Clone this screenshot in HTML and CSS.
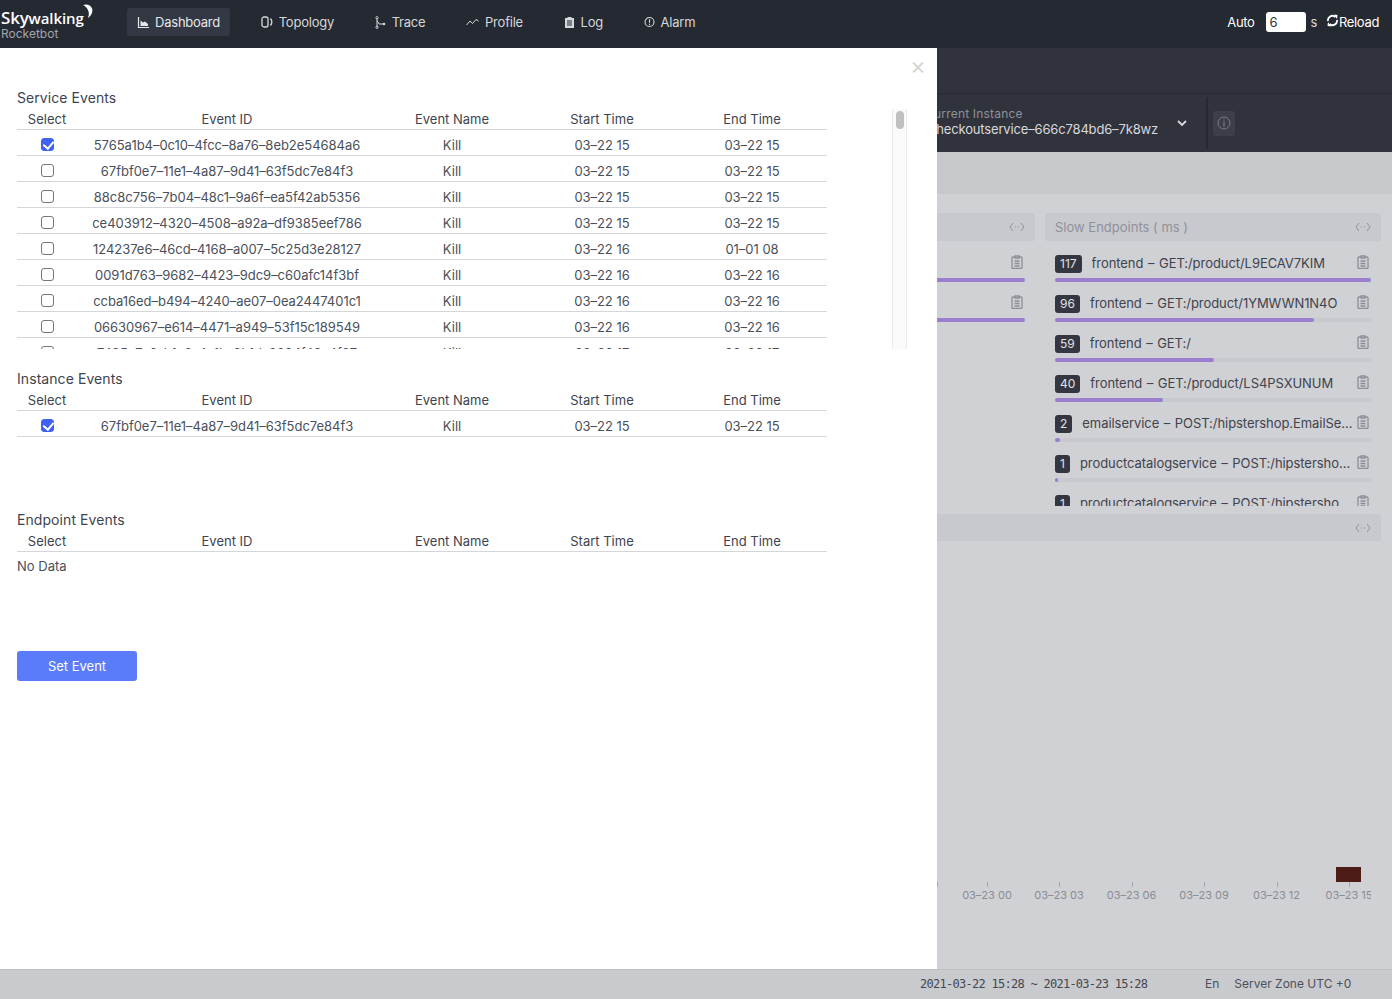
FILE: index.html
```html
<!DOCTYPE html>
<html lang="en">
<head>
<meta charset="utf-8">
<title>Skywalking Rocketbot</title>
<link rel="stylesheet" href="styles.css">
</head>
<body>
<svg class="defs" width="0" height="0" aria-hidden="true">
  <symbol id="clip" viewBox="0 0 12 14"><path d="M3.500 2H2a1 1 0 0 0-1 1v9.500a1 1 0 0 0 1 1h8a1 1 0 0 0 1-1V3a1 1 0 0 0-1-1H8.500M4 1h4v2H4zM3.500 6h5M3.500 8.500h5M3.500 11h5" fill="none" stroke="currentColor" stroke-width="1.300"/></symbol>
  <symbol id="code" viewBox="0 0 16 10"><path d="M4 1 1 5l3 4M12 1l3 4-3 4" fill="none" stroke="currentColor" stroke-width="1"/><path d="M6 5h1M9 5h1" stroke="currentColor" stroke-width="1.200"/></symbol>
</svg>
<header class="topbar">
  <div class="logo">
    <div class="logo-main"><span class="logo-sky">Sky</span>walking<svg class="logo-arc" width="11" height="15" viewBox="0 0 11 15"><path d="M1 1c3-1.200 8-.5 9.200 4 .8 3.500-1.200 7-4.200 9 1.200-3 1.200-6-.3-8.500C4.800 3.500 3 2 1 1z" fill="#fff"/></svg></div>
    <div class="logo-sub">Rocketbot</div>
  </div>
  <nav class="nav">
    <a class="nav-item active"><svg width="12" height="11" viewBox="0 0 12 11"><path d="M1.500 0v10.500H12" fill="none" stroke="currentColor" stroke-width="1.200"/><path d="M3.500 9V3.500l2.500 2 2-1 3 2.500v2z" fill="currentColor"/></svg>Dashboard</a>
    <a class="nav-item"><svg width="12" height="12" viewBox="0 0 12 12"><rect x="1" y="1" width="6" height="10" rx="2" fill="none" stroke="currentColor" stroke-width="1.300"/><path d="M9.500 2.500c1.500 2 1.500 5 0 7" fill="none" stroke="currentColor" stroke-width="1.300"/></svg>Topology</a>
    <a class="nav-item"><svg width="11" height="13" viewBox="0 0 11 13"><path d="M2 2v9.500M2 4.500l2 3.500h4" fill="none" stroke="currentColor"/><circle cx="2" cy="1.700" r="1.200" fill="none" stroke="currentColor" stroke-width=".8"/><circle cx="2" cy="11.300" r="1.200" fill="none" stroke="currentColor" stroke-width=".8"/><circle cx="9" cy="8" r="1.300" fill="currentColor"/></svg>Trace</a>
    <a class="nav-item"><svg width="13" height="12" viewBox="0 0 13 12"><path d="M.5 9 4 5l2.500 2.500L10 3.500 12.500 5" fill="none" stroke="currentColor"/></svg>Profile</a>
    <a class="nav-item"><svg width="11" height="12" viewBox="0 0 11 12"><path d="M1 2h2.500V1h4v1H10v10H1z" fill="currentColor"/><path d="M3 5h5M3 7h5M3 9h5" stroke="#252932" stroke-width="1"/></svg>Log</a>
    <a class="nav-item"><svg width="11" height="12" viewBox="0 0 11 12"><circle cx="5.500" cy="6" r="4.500" fill="none" stroke="currentColor" stroke-width="1.100"/><path d="M5.500 3.200v3.600M5.500 7.800v1.100" stroke="currentColor" stroke-width="1.100"/></svg>Alarm</a>
  </nav>
  <div class="auto">
    <span>Auto</span>
    <input class="auto-input" type="text" value="6">
    <span class="auto-s">s</span>
    <a class="reload"><svg width="13" height="13" viewBox="0 0 13 13"><path d="M2 7a4.500 4.500 0 0 1 7.500-4M11 6a4.500 4.500 0 0 1-7.500 4" fill="none" stroke="#fff" stroke-width="1.800"/><path d="M8 .5 11.500 1 11 5zM5 12.500 1.500 12 2 8z" fill="#fff"/></svg>Reload</a>
  </div>
</header>

<div class="stage">
  <main class="behind">
    <div class="bar-one"></div>
    <div class="bar-two">
      <div class="selector">
        <div class="selector-label">Current Instance</div>
        <div class="selector-value">checkoutservice–666c784bd6–7k8wz</div>
      </div>
      <svg class="chevron" width="10" height="7" viewBox="0 0 10 7"><path d="M1 1l4 4 4-4" fill="none" stroke="#d8d9dc" stroke-width="1.800"/></svg>
      <div class="bar-sep"></div>
      <div class="info"><svg width="14" height="14" viewBox="0 0 14 14"><circle cx="7" cy="7" r="6" fill="none" stroke="currentColor"/><path d="M7 6v4.500M7 3.500v1.300" stroke="currentColor" stroke-width="1.200"/></svg></div>
    </div>
    <div class="bar-three"></div>
    <div class="panels">
      <section class="panel">
        <div class="panel-head"><span></span><svg class="code"><use href="#code"/></svg></div>
        <div class="panel-list">
          <div class="item"><div class="item-top"><span class="item-name"></span><svg class="clip"><use href="#clip"/></svg></div><div class="track"><div class="fill" style="width:100%"></div></div></div>
          <div class="item"><div class="item-top"><span class="item-name"></span><svg class="clip"><use href="#clip"/></svg></div><div class="track"><div class="fill" style="width:100%"></div></div></div>
        </div>
      </section>
      <section class="panel">
        <div class="panel-head"><span>Slow Endpoints ( ms )</span><svg class="code"><use href="#code"/></svg></div>
        <div class="panel-list">
          <div class="item"><div class="item-top"><span class="badge">117</span><span class="item-name">frontend – GET:/product/L9ECAV7KIM</span><svg class="clip"><use href="#clip"/></svg></div><div class="track"><div class="fill" style="width:100%"></div></div></div>
          <div class="item"><div class="item-top"><span class="badge">96</span><span class="item-name">frontend – GET:/product/1YMWWN1N4O</span><svg class="clip"><use href="#clip"/></svg></div><div class="track"><div class="fill" style="width:82%"></div></div></div>
          <div class="item"><div class="item-top"><span class="badge">59</span><span class="item-name">frontend – GET:/</span><svg class="clip"><use href="#clip"/></svg></div><div class="track"><div class="fill" style="width:50.400%"></div></div></div>
          <div class="item"><div class="item-top"><span class="badge">40</span><span class="item-name">frontend – GET:/product/LS4PSXUNUM</span><svg class="clip"><use href="#clip"/></svg></div><div class="track"><div class="fill" style="width:34.200%"></div></div></div>
          <div class="item"><div class="item-top"><span class="badge">2</span><span class="item-name">emailservice – POST:/hipstershop.EmailService/SendOrderConfirmation</span><svg class="clip"><use href="#clip"/></svg></div><div class="track"><div class="fill" style="width:1.700%"></div></div></div>
          <div class="item"><div class="item-top"><span class="badge">1</span><span class="item-name">productcatalogservice – POST:/hipstershop.ProductCatalogService/GetProduct</span><svg class="clip"><use href="#clip"/></svg></div><div class="track"><div class="fill" style="width:1%"></div></div></div>
          <div class="item"><div class="item-top"><span class="badge">1</span><span class="item-name">productcatalogservice – POST:/hipstershop.ProductCatalogService/ListProducts</span><svg class="clip"><use href="#clip"/></svg></div><div class="track"><div class="fill" style="width:1%"></div></div></div>
        </div>
      </section>
    </div>
    <div class="wide-head"><svg class="code"><use href="#code"/></svg></div>
    <svg class="chart" width="435" height="60" viewBox="0 0 435 60">
      <rect class="chart-cell" x="399" y="11" width="25" height="15"/>
      <g class="chart-ticks">
        <path d="M.5 26v5M50.500 26v5M122.500 26v5M195.500 26v5M267.500 26v5M340.500 26v5M412.500 26v5"/>
      </g>
      <g class="chart-labels">
        <text x="50" y="43">03–23 00</text>
        <text x="122" y="43">03–23 03</text>
        <text x="194.500" y="43">03–23 06</text>
        <text x="267" y="43">03–23 09</text>
        <text x="339.500" y="43">03–23 12</text>
        <text x="412" y="43">03–23 15</text>
      </g>
    </svg>
  </main>

  <aside class="drawer">
    <button class="close" type="button">×</button>

    <h3 class="section-title">Service Events</h3>
    <div class="table-box tall">
      <table class="events">
        <thead><tr><th>Select</th><th>Event ID</th><th>Event Name</th><th>Start Time</th><th>End Time</th></tr></thead>
        <tbody>
          <tr><td><input type="checkbox" checked></td><td>5765a1b4–0c10–4fcc–8a76–8eb2e54684a6</td><td>Kill</td><td>03–22 15</td><td>03–22 15</td></tr>
          <tr><td><input type="checkbox"></td><td>67fbf0e7–11e1–4a87–9d41–63f5dc7e84f3</td><td>Kill</td><td>03–22 15</td><td>03–22 15</td></tr>
          <tr><td><input type="checkbox"></td><td>88c8c756–7b04–48c1–9a6f–ea5f42ab5356</td><td>Kill</td><td>03–22 15</td><td>03–22 15</td></tr>
          <tr><td><input type="checkbox"></td><td>ce403912–4320–4508–a92a–df9385eef786</td><td>Kill</td><td>03–22 15</td><td>03–22 15</td></tr>
          <tr><td><input type="checkbox"></td><td>124237e6–46cd–4168–a007–5c25d3e28127</td><td>Kill</td><td>03–22 16</td><td>01–01 08</td></tr>
          <tr><td><input type="checkbox"></td><td>0091d763–9682–4423–9dc9–c60afc14f3bf</td><td>Kill</td><td>03–22 16</td><td>03–22 16</td></tr>
          <tr><td><input type="checkbox"></td><td>ccba16ed–b494–4240–ae07–0ea2447401c1</td><td>Kill</td><td>03–22 16</td><td>03–22 16</td></tr>
          <tr><td><input type="checkbox"></td><td>06630967–e614–4471–a949–53f15c189549</td><td>Kill</td><td>03–22 16</td><td>03–22 16</td></tr>
          <tr><td><input type="checkbox"></td><td>7495c7e6–b1c6–4a1b–9b1d–6604f43c4f97</td><td>Kill</td><td>03–22 17</td><td>03–22 17</td></tr>
        </tbody>
      </table>
      <div class="scroll-track"><div class="scroll-thumb"></div></div>
    </div>

    <h3 class="section-title">Instance Events</h3>
    <div class="table-box short">
      <table class="events">
        <thead><tr><th>Select</th><th>Event ID</th><th>Event Name</th><th>Start Time</th><th>End Time</th></tr></thead>
        <tbody>
          <tr><td><input type="checkbox" checked></td><td>67fbf0e7–11e1–4a87–9d41–63f5dc7e84f3</td><td>Kill</td><td>03–22 15</td><td>03–22 15</td></tr>
        </tbody>
      </table>
    </div>

    <h3 class="section-title">Endpoint Events</h3>
    <div class="table-box short">
      <table class="events">
        <thead><tr><th>Select</th><th>Event ID</th><th>Event Name</th><th>Start Time</th><th>End Time</th></tr></thead>
      </table>
      <div class="no-data">No Data</div>
    </div>

    <button class="set-event" type="button">Set Event</button>
  </aside>
</div>

<footer class="footer">
  <span class="footer-time">2021-03-22 15:28 ~ 2021-03-23 15:28</span>
  <span class="footer-lang">En</span>
  <span class="footer-zone">Server Zone UTC +0</span>
</footer>
</body>
</html>
```

FILE: styles.css
```css
* { box-sizing: border-box; }
html, body { height: 100%; }
body {
  margin: 0;
  height: 999px;
  display: flex;
  flex-direction: column;
  overflow: hidden;
  font-family: Inter, "Liberation Sans", sans-serif;
  font-size: 13px;
  color: #3d444f;
  background: #d0d1d4;
}
.defs { position: absolute; }

/* top bar */
.topbar {
  height: 48px;
  flex: none;
  display: flex;
  align-items: center;
  background: #252932;
  color: #e6e7ea;
  padding: 0 13px 4px 0;
  letter-spacing: -0.22px;
}
.logo { width: 127px; padding-left: 1px; padding-top: 6px; }
.logo-main {
  display: flex;
  align-items: baseline;
  font-family: "Open Sans", "Liberation Sans", sans-serif;
  font-size: 15px;
  font-weight: 600;
  line-height: 16px;
  color: #fff;
  letter-spacing: -0.1px;
}
.logo-sky { font-size: 17px; letter-spacing: -0.2px; line-height: 16px; }
.logo-arc { align-self: flex-start; margin: -6px 0 0 -2px; }
.logo-sub { font-size: 12px; line-height: 13px; margin-top: 1px; color: #a3a5ac; letter-spacing: 0; }
.nav { display: flex; gap: 20.600px; }
.nav-item {
  height: 28px;
  display: flex;
  align-items: center;
  gap: 6px;
  padding: 0 10px;
  border-radius: 3px;
  color: #d6d7da;
}
.nav-item.active { background: #333844; color: #e6e7ea; }
.auto { margin-left: auto; display: flex; align-items: center; color: #fff; letter-spacing: -0.35px; }
.auto-input {
  width: 40px;
  height: 20px;
  margin: 0 4px 0 12px;
  padding: 0 3px;
  border: 0;
  border-radius: 3px;
  background: #fff;
  color: #333;
  font: 13px Inter, sans-serif;
}
.auto-s { color: #d6d7da; }
.reload { display: flex; align-items: center; margin-left: 9px; }
.reload svg { margin-top: -3px; }

/* dimmed page behind the drawer */
.stage { position: relative; flex: 1; min-height: 0; overflow: hidden; }
.behind { height: 100%; display: flex; flex-direction: column; }
.bar-one { height: 46px; flex: none; background: #30333c; border-bottom: 1px solid #272a32; }
.bar-two {
  height: 58px;
  flex: none;
  display: flex;
  align-items: center;
  background: #30333c;
  padding-left: 929px;
}
.selector { width: 229px; font-size: 13px; white-space: nowrap; margin-top: -2px; }
.selector-label { font-size: 12px; line-height: 14px; color: #8f9199; margin-left: -4px; letter-spacing: 0.2px; }
.selector-value { line-height: 16px; color: #d8d9dc; letter-spacing: -0.16px; }
.chevron { margin-left: 19px; }
.bar-sep { width: 2px; height: 52px; background: #262930; margin-left: 19px; }
.info {
  width: 22px;
  height: 25px;
  margin-left: 5px;
  display: flex;
  align-items: center;
  justify-content: center;
  border-radius: 3px;
  background: #3c3f48;
  color: #7a7c84;
}
.bar-three { height: 42px; flex: none; background: #c7c8cc; }
.panels {
  flex: none;
  display: grid;
  grid-template-columns: 335px 336px;
  gap: 10px;
  padding: 19px 11px 0 700px;
}
.panel-head {
  height: 28px;
  display: flex;
  align-items: center;
  justify-content: space-between;
  padding: 0 10px;
  border-radius: 2px;
  background: #c8c9ce;
  color: #8f919a;
}
.code { width: 16px; height: 10px; color: #8f919a; }
.panel-list { height: 265px; overflow: hidden; padding: 14px 10px 0; }
.item { height: 40px; }
.item-top { height: 23px; display: flex; align-items: flex-start; }
.badge {
  flex: none;
  height: 18px;
  padding: 0 5px;
  margin-right: 10px;
  border-radius: 3px;
  background: #343741;
  color: #e2e3e6;
  font-size: 12px;
  line-height: 18px;
}
.item-name {
  flex: 1;
  min-width: 0;
  overflow: hidden;
  text-overflow: ellipsis;
  white-space: nowrap;
  line-height: 17px;
  color: #3f434d;
  word-spacing: 1px;
  letter-spacing: -0.06px;
}
.clip { flex: none; width: 12px; height: 14px; margin: 0 2px 0 4px; color: #8b8e98; }
.track { height: 4px; border-radius: 2px; background: #c8c9ce; }
.fill { height: 100%; border-radius: 2px; background: #9b7fcf; }
.wide-head { height: 27px; flex: none; margin: 8px 11px 0 0; display: flex; align-items: center; justify-content: flex-end; padding-right: 10px; background: #c8c9ce; border-radius: 2px; }
.chart { flex: none; width: 435px; margin: 315px 0 0 937px; display: block; overflow: hidden; clip-path: inset(0 1px 0 0); }
.chart-cell { fill: #4e1c16; }
.chart-ticks path { stroke: #a6a8ae; fill: none; }
.chart-labels text { font-family: Inter, sans-serif; font-size: 11px; fill: #8a8c95; text-anchor: middle; }

/* event drawer */
.drawer {
  position: absolute;
  left: 0;
  top: 0;
  bottom: 0;
  width: 937px;
  padding: 42px 0 0 17px;
  background: #fff;
}
.close {
  position: absolute;
  top: 7px;
  right: 9px;
  width: 20px;
  height: 22px;
  padding: 0;
  border: 0;
  background: none;
  color: #d4d4d4;
  font: 24px/22px Inter, sans-serif;
}
.section-title { margin: 0; height: 19px; font-size: 14px; font-weight: 400; line-height: 16px; color: #3d444f; letter-spacing: 0.07px; }
.table-box { position: relative; width: 890px; overflow: hidden; margin-bottom: 22px; }
.table-box.tall { height: 240px; }
.table-box.short { height: 100px; }
.events { width: 810px; border-collapse: collapse; table-layout: fixed; }
.events th:nth-child(1), .events td:nth-child(1) { width: 60px; }
.events th:nth-child(2), .events td:nth-child(2) { width: 300px; }
.events th, .events td { width: 150px; padding: 0; text-align: center; border-bottom: 1px solid #d4d6d9; }
.events th { height: 20px; font-weight: 400; font-size: 13px; vertical-align: middle; padding-top: 0; color: #3d444f; }
.events td { height: 26px; color: #4a505b; font-size: 13px; vertical-align: middle; padding-top: 5px; letter-spacing: -0.03px; }
.events input {
  appearance: none;
  -webkit-appearance: none;
  position: relative;
  display: block;
  width: 13px;
  height: 13px;
  margin: 0 auto;
  border: 1px solid #767676;
  border-radius: 3px;
  background: #fff;
}
.events input:checked { border-color: #3f62f3; background: #3f62f3; }
.events input:checked::after {
  content: "";
  position: absolute;
  left: 3px;
  top: 0;
  width: 5px;
  height: 8px;
  border: solid #fff;
  border-width: 0 2px 2px 0;
  transform: rotate(40deg);
}
.no-data { padding-top: 6px; line-height: 16px; color: #4a505b; }
.scroll-track {
  position: absolute;
  top: 0;
  right: 0;
  bottom: 0;
  width: 15px;
  padding: 2px 2px 0 3px;
  background: #fafafa;
  border: solid #ebebeb;
  border-width: 0 1px;
}
.scroll-thumb { width: 8px; height: 18px; border-radius: 4px; background: #c1c1c1; }
.set-event {
  display: block;
  width: 120px;
  height: 30px;
  margin-top: -2px;
  border: 0;
  border-radius: 3px;
  background: #5a7cfa;
  color: #fff;
  font: 13px Inter, sans-serif;
}

/* footer */
.footer {
  height: 30px;
  flex: none;
  display: flex;
  align-items: center;
  padding: 0 0 2px 920px;
  background: #c9cacd;
  border-top: 1px solid #bfc0c4;
  color: #4c505c;
  font-size: 12px;
}
.footer-time { width: 285px; font-family: "DejaVu Sans Mono", monospace; font-size: 12px; letter-spacing: -0.73px; color: #43474f; }
.footer-zone { margin-left: 15px; }
```
